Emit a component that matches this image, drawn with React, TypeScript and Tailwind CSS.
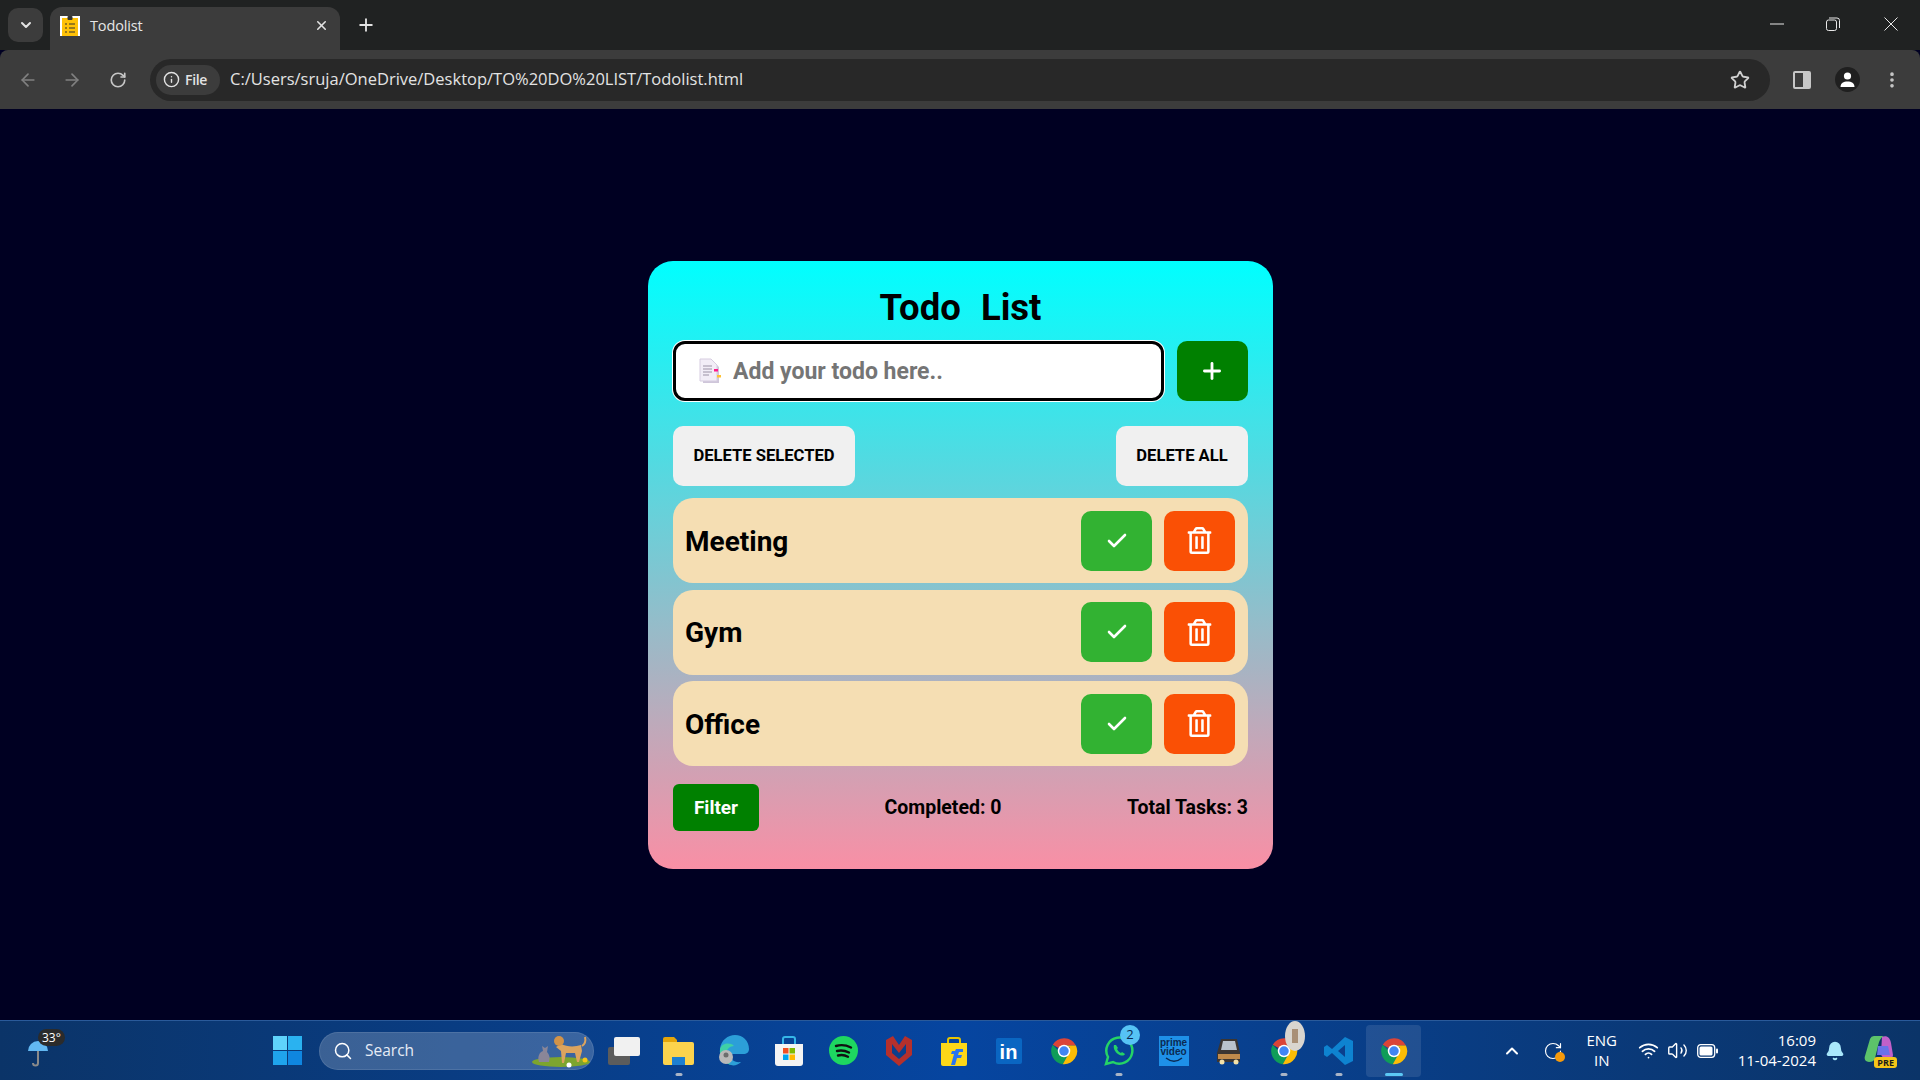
import { Check, Plus, ChevronDown, X, ArrowLeft, ArrowRight, RotateCw, Info, Star, EllipsisVertical, Search, ChevronUp, Wifi, Volume2, Bell } from "lucide-react";
import { FaRegTrashAlt } from "react-icons/fa";
import type { ReactNode } from "react";

const TODO = 'Roboto,"Liberation Sans",Arial,sans-serif';
const UI = '"Open Sans","Noto Sans",sans-serif';

function Chrome({ s = 30 }: { s?: number }) {
  return (
    <svg width={s} height={s} viewBox="0 0 48 48">
      <path d="M24 24 L6 14 A21 21 0 0 1 43 15 L24 15Z" fill="#db4437" />
      <path d="M6 14 A21 21 0 0 0 22 45 L31 29 L24 33 Z" fill="#0f9d58" />
      <path d="M43 15 A21 21 0 0 1 22 45 L31 29 L33 18 L24 15Z" fill="#fbbc05" />
      <circle cx="24" cy="24" r="10" fill="#fff" />
      <circle cx="24" cy="24" r="7.6" fill="#4285f4" />
    </svg>
  );
}

function Slot({ children, dot, active }: { children: ReactNode; dot?: boolean; active?: boolean }) {
  return (
    <div className={`relative flex h-[52px] w-[55px] shrink-0 items-center justify-center rounded ${active ? "bg-white/10" : ""}`}>
      {children}
      {dot && <span className="absolute bottom-[1px] left-1/2 h-[3px] w-[7px] -translate-x-1/2 rounded-full bg-[#a9b4c6]" />}
      {active && <span className="absolute bottom-[1px] left-1/2 h-[3px] w-[18px] -translate-x-1/2 rounded-full bg-[#5cc8f5]" />}
    </div>
  );
}

function Row({ name }: { name: string }) {
  return (
    <div className="flex h-[85px] items-center justify-between rounded-[20px] bg-[#f5deb3] pl-[12px] pr-[13px]">
      <span className="pt-[2px] text-[28px] font-bold text-black">{name}</span>
      <div className="flex gap-[12px]">
        <button className="flex h-[60px] w-[71px] items-center justify-center rounded-[10px] bg-[#32b232] text-white">
          <Check size={24} strokeWidth={2.6} />
        </button>
        <button className="flex h-[60px] w-[71px] items-center justify-center rounded-[10px] bg-[#fa5005] text-white">
          <FaRegTrashAlt size={27} />
        </button>
      </div>
    </div>
  );
}

export default function App() {
  return (
    <div className="flex h-screen w-full flex-col overflow-hidden bg-[#000022]" style={{ fontFamily: UI }}>
      {/* tab strip */}
      <div className="flex h-[50px] shrink-0 items-end bg-[#202222] pl-[8px]">
        <div className="mb-[8px] flex h-[34px] w-[35px] items-center justify-center rounded-[10px] bg-[#3c3c3c] text-[#e3e3e3]">
          <ChevronDown size={16} strokeWidth={3} />
        </div>
        <div className="ml-[7px] flex h-[43px] w-[290px] items-center rounded-t-[12px] bg-[#3c3c3c] pb-[6px] pl-[10px] pr-[11px]">
          <svg width="20" height="20" viewBox="0 0 20 20" className="shrink-0">
            <rect width="20" height="20" fill="#fff" />
            <rect x="2" y="2" width="16" height="18" fill="#ffc107" />
            <rect x="7.5" y="0" width="5" height="4" rx="1" fill="#333" />
            <path d="M5 8h2M9 8h6M5 12h2M9 12h6M5 16h2M9 16h6" stroke="#333" strokeWidth="1.2" />
          </svg>
          <span className="ml-[10px] flex-1 text-[14.5px] font-medium tracking-[-0.15px] text-[#e6e6e6]">Todolist</span>
          <X size={15} strokeWidth={2.5} className="text-[#e3e3e3]" />
        </div>
        <div className="mb-[15px] ml-[16px] text-[#e3e3e3]">
          <Plus size={20} strokeWidth={2.2} />
        </div>
        <div className="ml-auto flex h-full items-start text-[#e8e8e8]">
          <div className="flex h-[48px] w-[55px] items-center justify-center">
            <svg width="14" height="2" viewBox="0 0 14 2" stroke="currentColor" strokeWidth="1"><path d="M0 1h14" /></svg>
          </div>
          <div className="flex h-[48px] w-[58px] items-center justify-center">
            <svg width="14" height="14" viewBox="0 0 14 14" fill="none" stroke="currentColor" strokeWidth="1">
              <rect x="0.5" y="3" width="10" height="10.5" rx="2" />
              <path d="M3 1h8a2.5 2.5 0 0 1 2.5 2.5V11" />
            </svg>
          </div>
          <div className="flex h-[48px] w-[58px] items-center justify-center">
            <svg width="14" height="14" viewBox="0 0 14 14" stroke="currentColor" strokeWidth="1"><path d="M0.5 0.5 13.5 13.5M13.5 0.5 0.5 13.5" /></svg>
          </div>
        </div>
      </div>

      {/* toolbar */}
      <div className="flex h-[59px] shrink-0 items-center rounded-t-[8px] bg-[#3c3c3c] text-[#c7c7c7]">
        <ArrowLeft size={20} strokeWidth={2} className="ml-[18px] text-[#808080]" />
        <ArrowRight size={20} strokeWidth={2} className="ml-[24px] text-[#808080]" />
        <RotateCw size={18} strokeWidth={2.2} className="ml-[27px]" />
        <div className="ml-[23px] flex h-[42px] flex-1 items-center rounded-full bg-[#282828] pl-[6px] pr-[20px]">
          <div className="flex h-[30px] w-[64px] items-center gap-[5px] rounded-full bg-[#3c3c3c] pl-[7px] text-[#e3e3e3]">
            <Info size={17} strokeWidth={2} />
            <span className="text-[14px] font-semibold tracking-[-0.3px]">File</span>
          </div>
          <span className="ml-[10px] flex-1 text-[16.500px] text-[#e3e3e3]">C:/Users/sruja/OneDrive/Desktop/TO%20DO%20LIST/Todolist.html</span>
          <Star size={20} strokeWidth={2.2} className="text-[#d0d0d0]" />
        </div>
        <div className="ml-[23px] flex h-[18px] w-[18px] overflow-hidden rounded-[2px] border-2 border-[#c7c7c7]">
          <span className="flex-1 bg-[#3c3c3c]" /><span className="w-[6px] bg-[#c7c7c7]" />
        </div>
        <div className="ml-[23.500px] flex h-[25px] w-[25px] items-center justify-center rounded-full bg-[#1f1f1f]">
          <svg width="17" height="17" viewBox="0 0 17 17" fill="#fff"><circle cx="8.5" cy="5" r="3.6" /><path d="M1.5 16c0-4 3-5.6 7-5.6s7 1.600 7 5.600z" /></svg>
        </div>
        <EllipsisVertical size={20} strokeWidth={2.4} className="ml-[22.500px] mr-[18px]" />
      </div>

      {/* page */}
      <main className="flex flex-1 items-center justify-center pt-[1px]">
        <div
          className="ml-[1px] flex w-[625px] flex-col rounded-[25px] bg-linear-to-b/srgb from-[#00ffff] to-[#f98fa5] px-[25px] pb-[38px] pt-[20px] text-black"
          style={{ fontFamily: TODO }}
        >
          <h1 className="h-[50px] pt-[2px] text-center text-[36.500px] font-bold leading-[50px] [word-spacing:11px]">Todo List</h1>
          <div className="mt-[10px] flex items-stretch justify-between">
            <div className="flex h-[60px] w-[491px] items-center rounded-[12px] border-[3px] border-black bg-white pl-[22px] ring-1 ring-white">
              <svg width="24" height="27" viewBox="0 0 24 27" className="shrink-0">
                <path d="M5 3h10l6 6v16H5z" fill="#cfc6da" />
                <path d="M2 1h11l6 6v16H2z" fill="#f2edf7" stroke="#d6cde0" />
                <path d="M5 8h9M5 11h9M5 14h9M5 17h6" stroke="#9b92a6" strokeWidth="1" />
                <rect x="16" y="11" width="4" height="2.500" fill="#ff1a8c" />
                <rect x="19" y="17" width="4" height="2.500" fill="#ffc233" />
              </svg>
              <input
                readOnly
                placeholder="Add your todo here.."
                className="ml-[11px] flex-1 bg-transparent pt-[2px] text-[23px] font-bold outline-none placeholder:text-[#757575]"
              />
            </div>
            <button className="flex h-[60px] w-[71px] items-center justify-center rounded-[10px] bg-[#008000] pr-[1px] text-white">
              <Plus size={26} strokeWidth={2.6} />
            </button>
          </div>
          <div className="mt-[25px] flex justify-between">
            <button className="h-[60px] w-[182px] rounded-[10px] bg-[#f0f0f0] text-[16.600px] font-bold">DELETE SELECTED</button>
            <button className="h-[60px] w-[132px] rounded-[10px] bg-[#f0f0f0] text-[16.600px] font-bold">DELETE ALL</button>
          </div>
          <div className="mt-[12px] flex flex-col gap-[6.500px]">
            <Row name="Meeting" />
            <Row name="Gym" />
            <Row name="Office" />
          </div>
          <div className="mt-[18px] flex items-center justify-between">
            <button className="h-[47px] w-[86px] rounded-[6px] bg-[#008000] pt-[1px] text-[19px] font-bold text-white">Filter</button>
            <span className="pt-[1px] text-[19.500px] font-bold">Completed: 0</span>
            <span className="pt-[1px] text-[19.500px] font-bold">Total Tasks: 3</span>
          </div>
        </div>
      </main>

      {/* taskbar */}
      <footer className="flex h-[60px] shrink-0 items-center border-t border-[#2a5a9a] bg-gradient-to-r from-[#0b3468] via-[#0645a0] to-[#0b3468] text-white">
        <div className="relative flex h-full w-[260px] shrink-0 items-center pl-[27px]">
          <svg width="22" height="30" viewBox="0 0 22 30" className="mt-[6px]">
            <path d="M1 12 A10 10 0 0 1 21 12Z" fill="#62b8f2" />
            <path d="M11 12v12a2.500 2.500 0 0 1-5 0" fill="none" stroke="#8a8a8a" strokeWidth="2" />
          </svg>
          <span className="absolute left-[38px] top-[8px] rounded-full bg-[#2b2b2b] px-[4px] text-[12px] leading-[17px]">33°</span>
        </div>
        <Slot>
          <svg width="29" height="29" viewBox="0 0 29 29">
            <rect x="0" y="0" width="14" height="14" fill="#5fd3fb" />
            <rect x="15" y="0" width="14" height="14" fill="#2ab2f0" />
            <rect x="0" y="15" width="14" height="14" fill="#1fa4ec" />
            <rect x="15" y="15" width="14" height="14" fill="#0f86e0" />
          </svg>
        </Slot>
        <div className="ml-[4px] flex h-[38px] w-[275px] shrink-0 items-center rounded-full border border-white/10 bg-white/20 pl-[13px]">
          <Search size={20} strokeWidth={1.8} />
          <span className="ml-[12px] flex-1 text-[15.500px] text-[#e6ecf5]">Search</span>
          <svg width="62" height="34" viewBox="0 0 62 34">
            <ellipse cx="30" cy="28" rx="29" ry="5" fill="#7da52e" />
            <path d="M8 28c-2-6 1-10 4-11l-1-5 3 2 3-2-1 6c3 3 3 7 2 10z" fill="#8a8698" />
            <path d="M30 10c6 3 14 3 20 1l1 6-3 11h-2l-2-9-9 0-2 10h-2l-1-12-5-4z" fill="#dca45e" />
            <circle cx="28" cy="7" r="5" fill="#d39348" />
            <path d="M51 12c3-2 4-5 3-9" fill="none" stroke="#dca45e" strokeWidth="2" />
            <circle cx="38" cy="31" r="2.500" fill="#fff" /><circle cx="54" cy="26" r="2.500" fill="#f5c518" />
          </svg>
        </div>
        <div className="ml-[2px] flex">
          <Slot>
            <svg width="32" height="28" viewBox="0 0 32 28"><rect x="0" y="10" width="22" height="18" rx="2" fill="#5c5c5c" /><rect x="6" y="0" width="26" height="19" rx="2" fill="#f1f1f1" /></svg>
          </Slot>
          <Slot dot>
            <svg width="31" height="29" viewBox="0 0 31 29"><path d="M0 3a2 2 0 0 1 2-2h9l3 3v4H0z" fill="#e5a50a" /><path d="M0 6h29a2 2 0 0 1 2 2v19a2 2 0 0 1-2 2H2a2 2 0 0 1-2-2z" fill="#fcd34d" /><rect x="9" y="21" width="13" height="8" fill="#1d7fd1" /></svg>
          </Slot>
          <Slot>
            <svg width="31" height="31" viewBox="0 0 31 31">
              <path d="M2 14C3 5 10 0 17 0c8 0 14 6 14 14 0 3-2 5-6 5H12c0 5 4 9 11 8-3 3-7 4-10 3C6 28 1 22 2 14z" fill="#2c9fd8" />
              <path d="M2 14C4 8 12 7 16 11c-5 0-8 4-8 9 0 5 3 8 5 10C6 28 1 22 2 14z" fill="#3fd0a6" />
              <circle cx="8" cy="22" r="7" fill="#b9b9b9" /><circle cx="8" cy="20" r="2.500" fill="#6d6d6d" />
            </svg>
          </Slot>
          <Slot>
            <svg width="30" height="32" viewBox="0 0 30 32">
              <path d="M9 9V4a2 2 0 0 1 2-2h8a2 2 0 0 1 2 2v5" fill="none" stroke="#35b6e8" strokeWidth="2" />
              <path d="M1 9h28v19a3 3 0 0 1-3 3H4a3 3 0 0 1-3-3z" fill="#f4f4f4" />
              <rect x="9" y="13" width="5.500" height="5.500" fill="#f25022" /><rect x="15.500" y="13" width="5.500" height="5.500" fill="#7fba00" />
              <rect x="9" y="19.500" width="5.500" height="5.500" fill="#00a4ef" /><rect x="15.500" y="19.500" width="5.500" height="5.500" fill="#ffb900" />
            </svg>
          </Slot>
          <Slot>
            <svg width="29" height="29" viewBox="0 0 29 29"><circle cx="14.500" cy="14.500" r="14.500" fill="#1ed760" /><path d="M7 10c5-1.500 10-1 15 1.500M8 15c4-1 8-.5 12 1.500M9 19.500c3-.8 7-.4 10 1.200" fill="none" stroke="#111" strokeWidth="2.400" strokeLinecap="round" /></svg>
          </Slot>
          <Slot>
            <svg width="26" height="30" viewBox="0 0 26 30"><path d="M0 4 7 0l6 9 6-9 7 4v15L13 30 0 19z" fill="#b5302c" /><path d="M6 8l7 9 7-9v9l-7 6-7-6z" fill="#0b3f8c" /></svg>
          </Slot>
          <Slot>
            <svg width="26" height="30" viewBox="0 0 26 30"><path d="M7 7V4a2 2 0 0 1 2-2h8a2 2 0 0 1 2 2v3" fill="none" stroke="#e7c400" strokeWidth="2" /><path d="M0 7h26v21a2 2 0 0 1-2 2H2a2 2 0 0 1-2-2z" fill="#fcd718" /><path d="M15 13h7v3h-4l-1 3h4l-1 3h-4l-2 7h-4l3-11h-3l1-3h3z" fill="#2874f0" /></svg>
          </Slot>
          <Slot>
            <div className="flex h-[26px] w-[26px] items-end justify-center rounded-[2px] bg-[#0a66c2] text-[20px] font-bold leading-[24px] text-white" style={{ fontFamily: '"Liberation Sans",sans-serif' }}>in</div>
          </Slot>
          <Slot><Chrome /></Slot>
          <Slot dot>
            <svg width="30" height="30" viewBox="0 0 30 30" fill="none"><path d="M2 28l2-7A13 13 0 1 1 9 26z" stroke="#25d366" strokeWidth="2.500" /><path d="M10 9c-1 3 1 7 4 9 3 2 6 2 7 0l-3-2-1 1c-2-1-3-2-4-4l1-1-2-3z" fill="#25d366" /></svg>
            <span className="absolute right-[6px] top-[0px] flex h-[20px] w-[20px] items-center justify-center rounded-full bg-[#56c3f5] text-[13px] text-[#0b2a52]">2</span>
          </Slot>
          <Slot>
            <div className="flex h-[30px] w-[30px] flex-col items-center justify-center bg-[#1e90e8] text-[10px] font-bold leading-[9px] text-[#0b2a52]" style={{ fontFamily: '"Liberation Sans",sans-serif' }}>
              <span>prime</span><span>video</span>
              <svg width="18" height="6" viewBox="0 0 18 6" className="mt-[1px]"><path d="M1 1c5 4 11 4 16 0" fill="none" stroke="#0b2a52" strokeWidth="1.500" /></svg>
            </div>
          </Slot>
          <Slot>
            <svg width="30" height="30" viewBox="0 0 30 30"><path d="M7 3h16l3 14v9H3v-9z" fill="#3b3532" /><path d="M9 5h12l2 9H7z" fill="#b9c2cc" /><rect x="4" y="18" width="22" height="5" fill="#c08a4b" /><circle cx="8" cy="26" r="2.500" fill="#f3e1a9" /><circle cx="22" cy="26" r="2.500" fill="#f3e1a9" /></svg>
          </Slot>
          <Slot dot>
            <Chrome />
            <svg width="20" height="30" viewBox="0 0 20 30" className="absolute right-[6px] top-[-4px]"><ellipse cx="10" cy="15" rx="10" ry="15" fill="#d9d5cf" /><path d="M7 8h6v14H7z" fill="#a98f76" /></svg>
          </Slot>
          <Slot dot>
            <svg width="30" height="30" viewBox="0 0 30 30"><path d="M21 1l8 4v20l-8 4L8 17l-5 4-3-2v-8l3-2 5 4z" fill="#0e83d0" /><path d="M21 9l-7 6 7 6z" fill="#0b3f8c" /></svg>
          </Slot>
          <Slot active><Chrome /></Slot>
        </div>

        {/* tray */}
        <div className="ml-auto flex items-center">
          <ChevronUp size={20} strokeWidth={2.4} />
          <div className="relative ml-[21px] flex h-[20px] w-[20px] items-center justify-center">
            <RotateCw size={20} strokeWidth={1.4} />
            <span className="absolute bottom-[-1px] right-[-2px] h-[10px] w-[10px] rounded-full bg-[#f59a0c]" />
          </div>
          <div className="mb-[2px] ml-[16px] w-[46px] text-center text-[15px] leading-[20px]">ENG<br />IN</div>
          <Wifi size={21} strokeWidth={2} className="ml-[13px]" />
          <Volume2 size={21} strokeWidth={1.6} className="ml-[8px]" />
          <svg width="21" height="14" viewBox="0 0 21 14" fill="none" className="ml-[9px]"><rect x="0.7" y="0.7" width="17" height="12.600" rx="3" stroke="#fff" strokeWidth="1.300" /><rect x="2.500" y="2.500" width="13" height="9" rx="1.500" fill="#fff" /><rect x="19" y="4.500" width="2" height="5" rx="1" fill="#fff" /></svg>
          <div className="mb-[2px] ml-[20px] text-right text-[15px] leading-[20px]">16:09<br />11-04-2024</div>
          <Bell size={20} fill="#a9e8fb" stroke="#a9e8fb" className="ml-[9px]" />
          <div className="relative ml-[19px] mr-[26px] h-[30px] w-[30px]">
            <svg width="30" height="26" viewBox="0 0 30 26"><path d="M6 3a5 5 0 0 1 5-3h9c-4 2-5 6-6 10l-3 12c-1 3-3 4-6 4-4 0-5-3-4-6z" fill="#5cc36a" /><path d="M18 1c5-2 8 1 9 6l2 12c0 3-3 5-6 4-3-1-6-2-6-6z" fill="#c160c9" /><path d="M14 10h10l2 9-13 0z" fill="#6a72e8" /></svg>
            <span className="absolute bottom-[-2px] right-[-3px] rounded-[3px] bg-[#f5c518] px-[3px] text-[9px] font-bold leading-[11px] text-[#1a1a1a]">PRE</span>
          </div>
        </div>
      </footer>
    </div>
  );
}
